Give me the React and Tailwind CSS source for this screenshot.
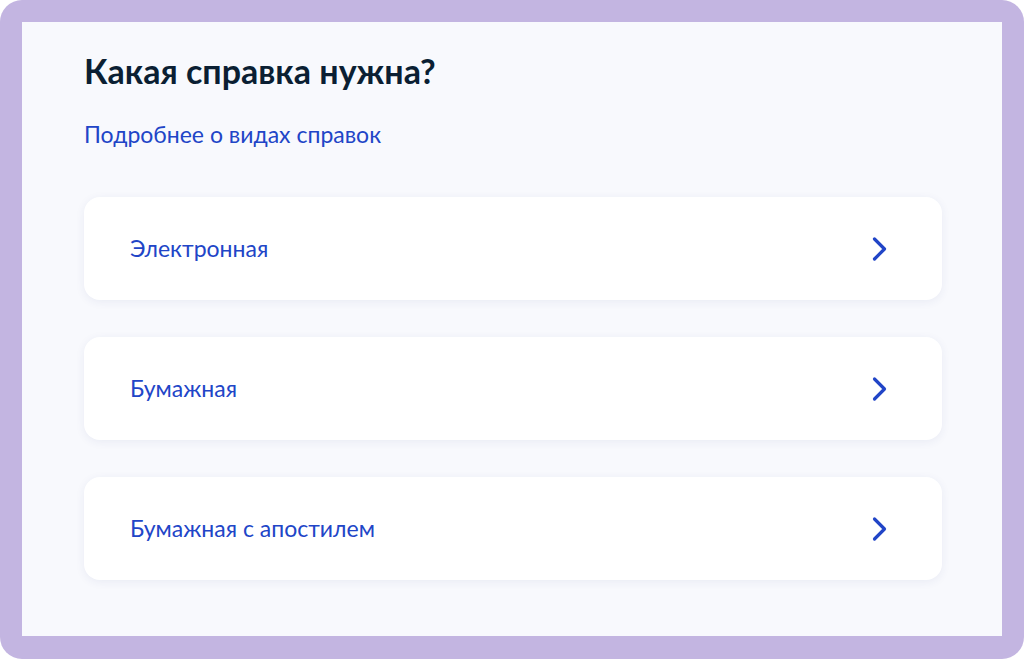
export default function App() {
  const items = ["Электронная", "Бумажная", "Бумажная с апостилем"];
  return (
    <div className="w-[1024px] h-[659px] bg-white" style={{ fontFamily: "Lato, 'Noto Sans', sans-serif" }}>
      <div className="w-full h-full rounded-[22px] bg-[#c3b5e1] p-[22px] pb-[23px]">
        <div className="w-full h-full bg-[#f8f9fd] pl-[62px] pr-[60px] pt-[27px]">
          <h1 className="text-[34px] leading-[44px] font-bold text-[#0b1f33]">Какая справка нужна?</h1>
          <a className="block mt-[27px] text-[23px] leading-[28px] text-[#2145c7]">Подробнее о видах справок</a>
          <div className="mt-[49px] flex flex-col gap-[37px]">
            {items.map((t) => (
              <div key={t} className="h-[103px] bg-white rounded-[16px] shadow-[0_2px_10px_rgba(40,60,130,0.07)] flex items-center justify-between pl-[46px] pr-[55px]">
                <span className="text-[23px] text-[#2145c7]">{t}</span>
                <svg width="15" height="26" viewBox="0 0 15 26" fill="none">
                  <path d="M2.5 3 L12.5 13 L2.5 23" stroke="#2145c7" strokeWidth="3.2" strokeLinecap="round" strokeLinejoin="round" />
                </svg>
              </div>
            ))}
          </div>
        </div>
      </div>
    </div>
  );
}
